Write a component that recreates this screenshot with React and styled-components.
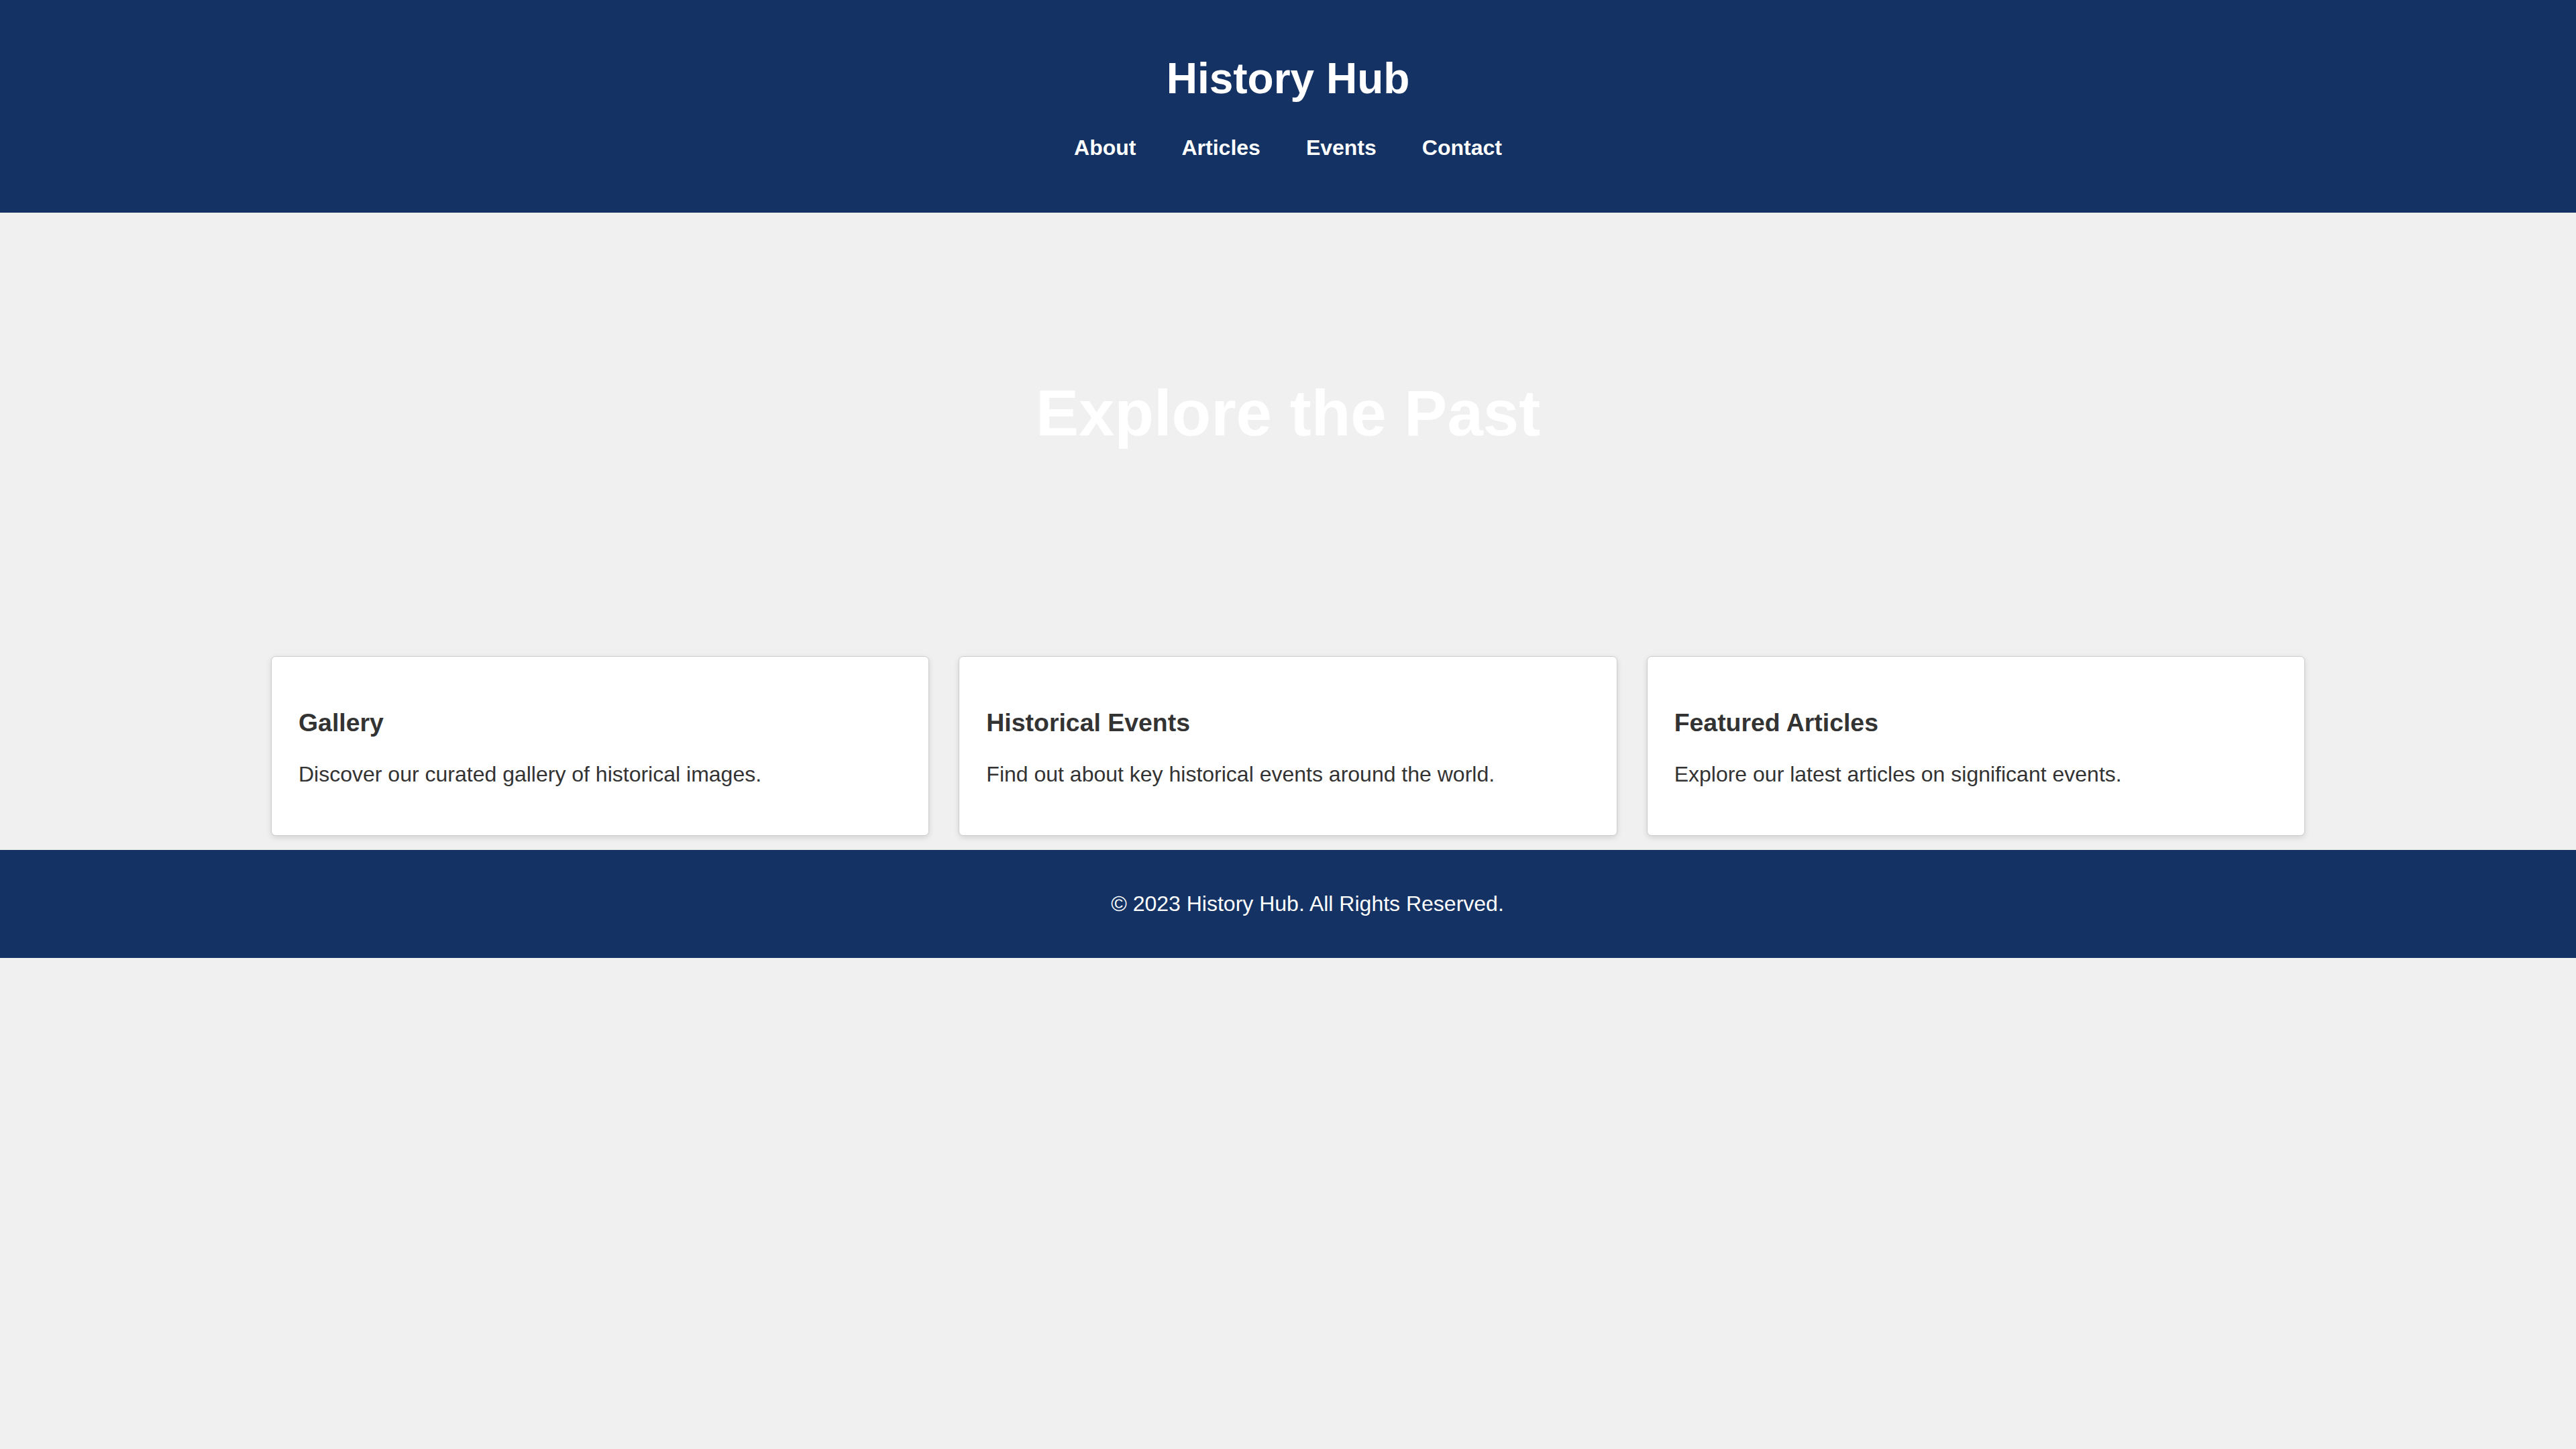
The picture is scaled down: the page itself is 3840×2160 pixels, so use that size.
import React from 'react';
import styled, { createGlobalStyle } from 'styled-components';

const GlobalStyle = createGlobalStyle`
  body {
    margin: 0;
    background: #f0f0f0;
    font-family: "Liberation Sans", Arial, Helvetica, sans-serif;
    font-size: 32px;
    color: #333;
  }
`;

const Header = styled.header`
  background: #143263;
  color: #fff;
  text-align: center;
  padding: 80px 20px 78px;
`;

const Title = styled.h1`
  margin: 0 0 48px;
  font-size: 64px;
  font-weight: bold;
`;

const Nav = styled.nav`
  display: flex;
  justify-content: center;
  gap: 68px;
`;

const NavLink = styled.a`
  color: #fff;
  font-weight: bold;
  text-decoration: none;
`;

const Hero = styled.section`
  text-align: center;
  padding: 244px 20px 234px;
`;

const HeroTitle = styled.h2`
  margin: 0;
  font-size: 96px;
  font-weight: bold;
  color: #fff;
`;

const Cards = styled.section`
  display: grid;
  grid-template-columns: repeat(3, 1fr);
  gap: 44px;
  width: 3032px;
  margin: 0 auto;
  padding: 73px 0 21px;
`;

const Card = styled.div`
  background: #fff;
  border: 1px solid #cccccc;
  border-radius: 7px;
  box-shadow: 0 3px 9px rgba(0, 0, 0, 0.12);
  padding: 0 40px;
  overflow: hidden;
`;

const CardTitle = styled.h3`
  font-size: 37.44px;
  margin: 77px 0 37px;
  color: #333;
`;

const CardText = styled.p`
  margin: 0 0 72px;
  color: #333;
`;

const Footer = styled.footer`
  background: #143263;
  color: #fff;
  text-align: center;
  padding: 62px 20px 62px 78px;
`;

const FooterText = styled.p`
  margin: 0;
`;

const links = ['About', 'Articles', 'Events', 'Contact'];

const cards = [
  { title: 'Gallery', text: 'Discover our curated gallery of historical images.' },
  { title: 'Historical Events', text: 'Find out about key historical events around the world.' },
  { title: 'Featured Articles', text: 'Explore our latest articles on significant events.' },
];

const App = () => (
  <>
    <GlobalStyle />
    <Header>
      <Title>History Hub</Title>
      <Nav>
        {links.map((l) => (
          <NavLink key={l} href={`#${l.toLowerCase()}`}>{l}</NavLink>
        ))}
      </Nav>
    </Header>
    <Hero>
      <HeroTitle>Explore the Past</HeroTitle>
    </Hero>
    <Cards>
      {cards.map((c) => (
        <Card key={c.title}>
          <CardTitle>{c.title}</CardTitle>
          <CardText>{c.text}</CardText>
        </Card>
      ))}
    </Cards>
    <Footer>
      <FooterText>© 2023 History Hub. All Rights Reserved.</FooterText>
    </Footer>
  </>
);

export default App;
